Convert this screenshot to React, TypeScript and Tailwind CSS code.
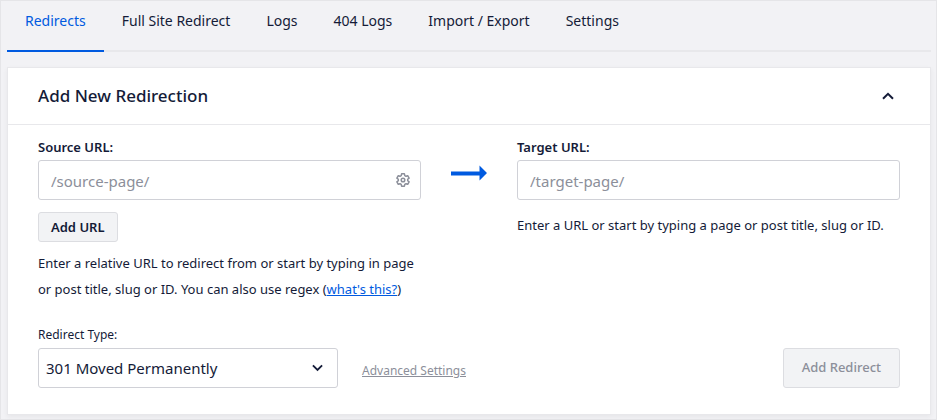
import type { ReactNode } from "react";
import clsx from "clsx";

const tabs = ["Redirects", "Full Site Redirect", "Logs", "404 Logs", "Import / Export", "Settings"];

const inputClass =
  "h-10 w-full rounded-[3px] border border-[#d0d1d7] bg-white px-3 pt-0.5 text-[15px] text-[#141b38] placeholder:text-[#8c8f9a] outline-none focus:border-[#005ae0]";

function Tabs() {
  return (
    <nav className="flex border-b-2 border-[#e8e8eb]">
      {tabs.map((tab, i) => (
        <a
          key={tab}
          href="#"
          aria-current={i === 0 ? "page" : undefined}
          className={clsx(
            "-mb-0.5 border-b-2 px-[18px] pt-2 pb-[17px] text-sm leading-6 whitespace-nowrap",
            i === 0 ? "border-[#005ae0] text-[#005ae0]" : "border-transparent text-[#141b38]",
          )}
        >
          {tab}
        </a>
      ))}
    </nav>
  );
}

function Field({ id, label, children }: { id: string; label: string; children: ReactNode }) {
  return (
    <div className="min-w-0 flex-1">
      <label htmlFor={id} className="block pb-[3px] text-[13px] leading-5 font-semibold">
        {label}
      </label>
      {children}
    </div>
  );
}

function GearIcon() {
  return (
    <svg viewBox="0 0 14 14" className="size-3.5" fill="none" stroke="currentColor" strokeWidth="1.5" strokeLinejoin="round">
      <path d="M5.6 .8h2.8l.4 1.8 1.2.7 1.7-.6 1.4 2.4-1.4 1.2v1.4l1.4 1.2-1.4 2.4-1.7-.6-1.2.7-.4 1.8H5.6l-.4-1.8-1.2-.7-1.7.6L.9 8.9l1.4-1.2V6.3L.9 5.1l1.4-2.4 1.7.6 1.2-.7z" />
      <circle cx="7" cy="7" r="1.8" />
    </svg>
  );
}

function Arrow() {
  return (
    <svg viewBox="0 0 36 16" className="mt-7 h-4 w-9 shrink-0" fill="#005ae0" aria-hidden>
      <path d="M0 6.5h28.5V.5L36 8l-7.5 7.5v-5H0z" />
    </svg>
  );
}

function Chevron({ className }: { className?: string }) {
  return (
    <svg viewBox="0 0 12 8" className={className} fill="none" stroke="currentColor" strokeWidth="2" aria-hidden>
      <path d="M1 1.2 6 6.2l5-5" />
    </svg>
  );
}

export default function App() {
  return (
    <div className="min-h-screen border border-[#e5e5e8] bg-[#f2f2f5] pr-[5px] pb-1 pl-1.5 font-['Noto_Sans',sans-serif] text-[#141b38]">
      <Tabs />

      <section className="mt-[15px] border border-[#e8e8eb] bg-white shadow-[0_2px_5px_rgba(0,0,0,0.05)]">
        <header className="flex h-[57px] items-center justify-between border-b border-[#e8e8eb] px-[30px]">
          <h2 className="text-[17px] leading-6 font-medium">Add New Redirection</h2>
          <button type="button" aria-label="Collapse" aria-expanded className="p-1.5">
            <Chevron className="h-2 w-3 rotate-180" />
          </button>
        </header>

        <form className="px-[30px] pt-3 pb-[26px]">
          <div className="flex gap-[30px]">
            <Field id="source" label="Source URL:">
              <div className="relative">
                <input id="source" type="text" placeholder="/source-page/" className={inputClass} />
                <button type="button" aria-label="Source options" className="absolute top-[13px] right-[11px] text-[#8c8f9a]">
                  <GearIcon />
                </button>
              </div>
              <button
                type="button"
                className="mt-3 h-[30px] rounded-[3px] border border-[#dcdde1] bg-[#f2f3f5] px-3 pt-0.5 text-[13px] font-semibold"
              >
                Add URL
              </button>
              <p className="mt-2 text-[13px] leading-[26px]">
                Enter a relative URL to redirect from or start by typing in page or post title, slug or ID. You can also
                use regex (
                <a href="#" className="text-[#005ae0] underline">
                  what's this?
                </a>
                )
              </p>
            </Field>

            <Arrow />

            <Field id="target" label="Target URL:">
              <input id="target" type="text" placeholder="/target-page/" className={inputClass} />
              <p className="mt-3 text-[13px] leading-[26px]">
                Enter a URL or start by typing a page or post title, slug or ID.
              </p>
            </Field>
          </div>

          <div className="mt-[23px] flex items-end">
            <div>
              <label htmlFor="type" className="block pb-[3px] text-xs leading-5">
                Redirect Type:
              </label>
              <div className="relative w-[300px]">
                <select
                  id="type"
                  className="h-10 w-full appearance-none rounded-[3px] border border-[#d0d1d7] bg-white px-[7px] text-[15px]"
                >
                  <option>301 Moved Permanently</option>
                </select>
                <Chevron className="pointer-events-none absolute top-4 right-[15px] h-2 w-[11px]" />
              </div>
            </div>
            <a href="#" className="ml-6 pb-[7px] text-xs leading-5 text-[#8c8f9a] underline">
              Advanced Settings
            </a>
            <button
              type="button"
              disabled
              className="ml-auto h-10 rounded-[3px] border border-[#dcdde1] bg-[#f2f3f5] px-[18px] text-[13px] font-medium text-[#8c8f9a]"
            >
              Add Redirect
            </button>
          </div>
        </form>
      </section>
    </div>
  );
}
